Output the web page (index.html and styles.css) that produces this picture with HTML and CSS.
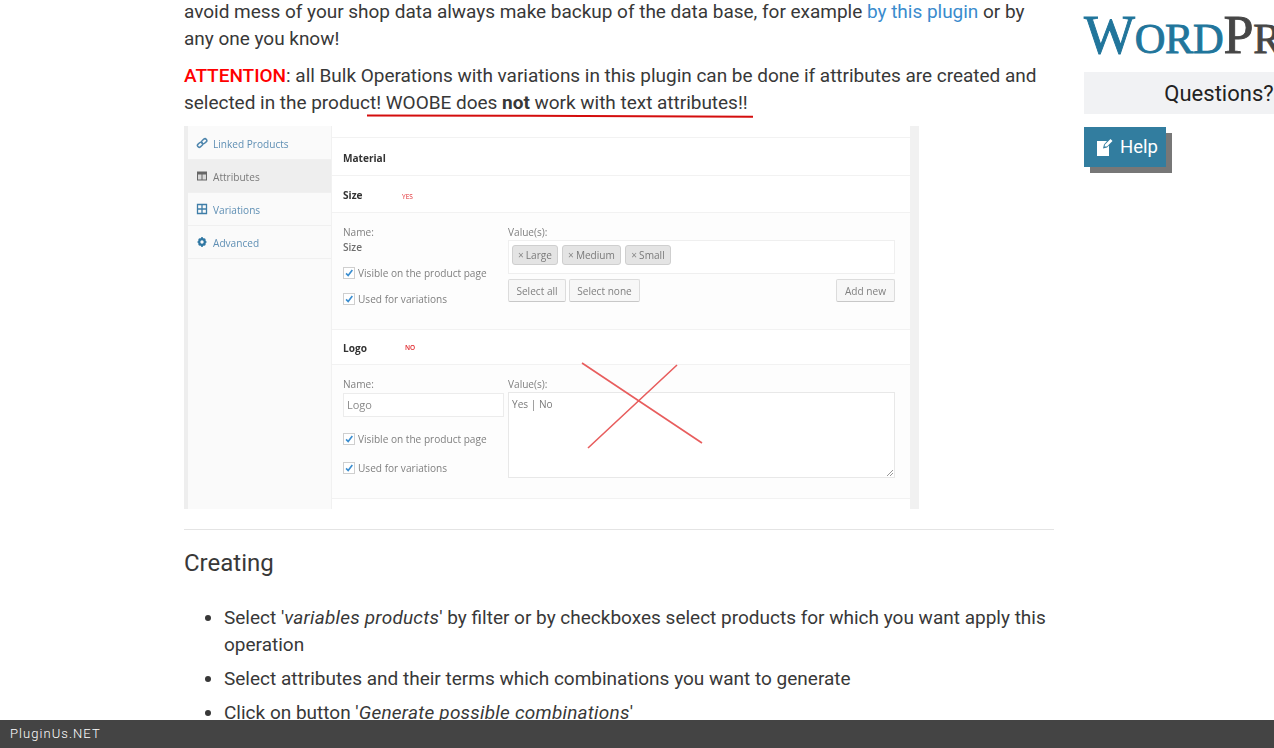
FILE: index.html
```html
<!DOCTYPE html>
<html lang="en">
<head>
<meta charset="utf-8">
<title>WOOBE Bulk Operations</title>
<link rel="stylesheet" href="styles.css">
</head>
<body>
<div class="page">
  <main class="article">
    <p>avoid mess of your shop data always make backup of the data base, for example <a href="#">by this plugin</a> or by any one you know!</p>
    <p><span class="attention">ATTENTION</span>: all Bulk Operations with variations in this plugin can be done if attributes are created and selected in the product! WOOBE does <strong>not</strong> work with text attributes!!<svg class="underline" width="388" height="5" viewBox="0 0 388 5"><path d="M0 1.600 L160 1.800 L386 2.800" fill="none" stroke="#d40d0d" stroke-width="2"/></svg></p>
    <div class="shot">
      <div class="strip-left"></div>
      <div class="tabs">
        <div class="tab tab-first"><svg class="tab-icon" viewBox="0 0 12 12"><g fill="none" stroke="#4f86ad" stroke-width="1.500"><rect x="1.200" y="6" width="5.600" height="3.600" rx="1.800" transform="rotate(-40 4 7.800)"/><rect x="5.400" y="2.400" width="5.600" height="3.600" rx="1.800" transform="rotate(-40 8.200 4.200)"/></g></svg><span>Linked Products</span></div>
        <div class="tab tab-active"><svg class="tab-icon" viewBox="0 0 12 12"><path d="M1 1.500h10v9H1z" fill="#666"/><path d="M2 4.500h3.500v5H2zM6.500 4.500H10v5H6.500z" fill="#d8d8d8"/></svg><span>Attributes</span></div>
        <div class="tab"><svg class="tab-icon" viewBox="0 0 12 12"><path d="M1.500 1.500h9v9h-9zM6 1.500v9M1.500 6h9" fill="none" stroke="#3f7ea8" stroke-width="1.300"/></svg><span>Variations</span></div>
        <div class="tab"><svg class="tab-icon" viewBox="0 0 12 12"><circle cx="6" cy="6" r="2.800" fill="none" stroke="#2f77a3" stroke-width="2.200"/><path d="M6 1v2M6 9v2M1.500 6h2M8.500 6h2M2.800 2.800l1.400 1.400M7.800 7.800l1.400 1.400M2.800 9.200l1.400-1.400M7.800 4.200l1.400-1.400" stroke="#2f77a3" stroke-width="1.600"/></svg><span>Advanced</span></div>
      </div>
      <div class="main">
        <div class="main-top"></div>
        <div class="row row-material"><b>Material</b></div>
        <div class="row row-attr"><b>Size</b><span class="flag flag-yes">YES</span></div>
        <div class="panel panel-size">
          <div class="col-left">
            <div class="lbl">Name:</div>
            <div class="lbl lbl-strong">Size</div>
            <div class="check check-first"><span class="box"><svg viewBox="0 0 12 12"><path d="M2.500 6.500 L5 9 L10 2.500" fill="none" stroke="#3b8ed0" stroke-width="2"/></svg></span>Visible on the product page</div>
            <div class="check check-next"><span class="box"><svg viewBox="0 0 12 12"><path d="M2.500 6.500 L5 9 L10 2.500" fill="none" stroke="#3b8ed0" stroke-width="2"/></svg></span>Used for variations</div>
          </div>
          <div class="col-right">
            <div class="lbl">Value(s):</div>
            <div class="values">
              <span class="tag tag-large"><i>×</i>Large</span>
              <span class="tag tag-medium"><i>×</i>Medium</span>
              <span class="tag tag-small"><i>×</i>Small</span>
            </div>
            <div class="btns">
              <span class="btn btn-all">Select all</span>
              <span class="btn btn-none">Select none</span>
              <span class="btn btn-add">Add new</span>
            </div>
          </div>
        </div>
        <div class="row row-attr row-logo"><b>Logo</b><span class="flag flag-no">NO</span></div>
        <div class="panel panel-logo">
          <div class="col-left">
            <div class="lbl">Name:</div>
            <div class="input">Logo</div>
            <div class="check check-logo"><span class="box"><svg viewBox="0 0 12 12"><path d="M2.500 6.500 L5 9 L10 2.500" fill="none" stroke="#3b8ed0" stroke-width="2"/></svg></span>Visible on the product page</div>
            <div class="check check-logo"><span class="box"><svg viewBox="0 0 12 12"><path d="M2.500 6.500 L5 9 L10 2.500" fill="none" stroke="#3b8ed0" stroke-width="2"/></svg></span>Used for variations</div>
          </div>
          <div class="col-right">
            <div class="lbl">Value(s):</div>
            <div class="textarea">Yes | No<svg class="grip" width="8" height="8" viewBox="0 0 8 8"><path d="M1 7L7 1M4 7L7 4" stroke="#999" stroke-width="1"/></svg></div>
          </div>
        </div>
      </div>
      <div class="strip-right"></div>
      <svg class="cross" width="735" height="383" viewBox="0 0 735 383"><path d="M398 237 L518 317 M493 239 L404 322" fill="none" stroke="#e85d5d" stroke-width="1.600"/></svg>
    </div>
    <hr class="rule">
    <h3 class="heading">Creating</h3>
    <ul class="steps">
      <li>Select '<em>variables products</em>' by filter or by checkboxes select products for which you want apply this operation</li>
      <li>Select attributes and their terms which combinations you want to generate</li>
      <li>Click on button '<em>Generate possible combinations</em>'</li>
    </ul>
  </main>
  <aside class="side">
    <div class="logo-top"><svg width="60" height="4" viewBox="0 0 60 4"><path d="M6 0 Q22 4 38 0 Z" fill="#464646"/></svg></div>
    <div class="logo"><span class="logo-word">W<small>ORD</small></span><span class="logo-press">P<small>RESS</small></span></div>
    <div class="questions">Questions?</div>
    <a class="help" href="#"><svg width="17" height="18" viewBox="0 0 17 18"><path d="M1 3h10L8 6.500 7 10.500 11 9.500 13 7.500V18H1z" fill="#fff"/><path d="M8.500 8.500 L9 6.500 L14.500 1 L16.500 3 L11 8.500 Z" fill="#fff"/></svg><span>Help</span></a>
  </aside>
</div>
<footer class="bar">PluginUs.NET</footer>
</body>
</html>
```
FILE: styles.css
```css
html, body {
  margin: 0;
  padding: 0;
  height: 100%;
  overflow: hidden;
  background: #fff;
}
body {
  font-family: Roboto, "Liberation Sans", sans-serif;
  color: #383838;
}
.page {
  display: flex;
  align-items: flex-start;
  gap: 30px;
  margin-top: -2px;
  padding-left: 184px;
  width: 1400px;
}
.article {
  width: 870px;
  flex: none;
  font-size: 19px;
  line-height: 27px;
}
.article p {
  margin: 0 0 10px;
  position: relative;
  letter-spacing: -0.02px;
}
.article a { color: #3a8bcd; text-decoration: none; }
.attention { color: #f00; font-weight: 500; }
.article strong { font-weight: 700; }
.article em { letter-spacing: 0.22px; }
.underline {
  position: absolute;
  left: 183px;
  top: 52px;
}
.shot {
  position: relative;
  display: flex;
  width: 735px;
  height: 383px;
  margin-top: 9px;
  background: #fff;
  font-family: "Open Sans", sans-serif;
  font-size: 10.100px;
  line-height: 14px;
  color: #666;
  overflow: hidden;
  filter: blur(0.45px);
}
.strip-left { width: 4px; background: #eee; flex: none; }
.strip-right { width: 9px; background: #f1f1f1; flex: none; }
.tabs { width: 144px; flex: none; background: #fafafa; border-right: 1px solid #f1f1f1; box-sizing: border-box; }
.tab {
  display: flex;
  align-items: center;
  gap: 5px;
  height: 33px;
  box-sizing: border-box;
  padding: 2px 0 0 8px;
  border-bottom: 1px solid #f0f0f0;
  color: #5f8fb4;
}
.tab-first { height: 34px; padding-top: 3px; }
.tab-active { background: #eeeeee; color: #7a7a7a; }
.tab-icon { width: 12px; height: 12px; flex: none; margin-top: -3px; }
.main { flex: 1; min-width: 0; }
.main-top { height: 12px; border-bottom: 1px solid #f2f2f2; box-sizing: border-box; }
.row {
  display: flex;
  align-items: center;
  height: 38px;
  box-sizing: border-box;
  padding: 0 0 0 11px;
  border-bottom: 1px solid #f2f2f2;
  color: #333;
}
.row-material { padding-top: 2px; }
.row-attr { height: 37px; padding-top: 2px; }
.row b { font-weight: 700; }
.row-logo { height: 36px; border-top: 1px solid #f2f2f2; padding-top: 2px; }
.flag { font-size: 6.500px; color: #e0282d; position: absolute; left: 218px; }
.flag-yes { margin-top: 3px; }
.flag-no { font-weight: 600; left: 221px; margin-top: 0; }
.panel {
  display: flex;
  box-sizing: border-box;
  padding: 12px 15px 0 11px;
  background: #fdfdfd;
}
.panel-size { height: 116px; }
.panel-logo { height: 134px; border-bottom: 1px solid #f2f2f2; }
.col-left { width: 165px; flex: none; }
.col-right { width: 387px; flex: none; }
.lbl { color: #808080; }
.lbl-strong { font-weight: 600; color: #6e6e6e; margin-top: 1px; }
.check { display: flex; align-items: center; gap: 3px; color: #808080; height: 14px; }
.check-first { margin-top: 12px; }
.check-next { margin-top: 12px; }
.check-logo { margin-top: 15px; }
.box {
  width: 12px;
  height: 12px;
  flex: none;
  background: #fff;
  border: 1px solid #cfcfcf;
  box-sizing: border-box;
  display: flex;
}
.box svg { width: 100%; height: 100%; }
.values {
  display: flex;
  gap: 4px;
  height: 34px;
  margin-top: 1px;
  padding: 4px 0 0 3px;
  box-sizing: border-box;
  background: #fff;
  border: 1px solid #efefef;
}
.tag {
  display: flex;
  align-items: center;
  justify-content: center;
  box-sizing: border-box;
  height: 20px;
  background: #e4e4e4;
  border: 1px solid #cfcfcf;
  border-radius: 3px;
  color: #7a7a7a;
}
.tag i { font-style: normal; margin-right: 2px; color: #888; }
.tag-large { width: 46px; }
.tag-medium { width: 59px; }
.tag-small { width: 46px; }
.btns { display: flex; gap: 3px; margin-top: 5px; }
.btn {
  display: flex;
  align-items: center;
  justify-content: center;
  box-sizing: border-box;
  height: 23px;
  background: #f7f7f7;
  border: 1px solid #dcdcdc;
  border-bottom-color: #c8c8c8;
  border-radius: 2px;
  color: #808080;
}
.btn-all { width: 58px; }
.btn-none { width: 71px; }
.btn-add { width: 59px; margin-left: auto; }
.input {
  box-sizing: border-box;
  width: 161px;
  height: 24px;
  margin-top: 2px;
  padding: 4px 3px;
  background: #fff;
  border: 1px solid #ececec;
  color: #8a8a8a;
  font-size: 11px;
}
.textarea {
  position: relative;
  box-sizing: border-box;
  height: 86px;
  margin-top: 1px;
  padding: 4px 3px;
  background: #fff;
  border: 1px solid #e8e8e8;
  color: #7a7a7a;
}
.grip { position: absolute; right: 0; bottom: 0; }
.cross { position: absolute; left: 0; top: 0; }
.rule {
  border: 0;
  border-top: 1px solid #e4e4e4;
  margin: 20px 0 0;
}
.heading {
  margin: 19px 0 0;
  font-size: 24px;
  line-height: 29px;
  font-weight: 400;
}
.steps {
  margin: 26px 0 0;
  padding: 0 0 0 40px;
}
.steps li { margin-bottom: 7px; }
.side { width: 270px; flex: none; }
.logo-top { height: 2px; padding-left: 120px; overflow: hidden; }
.logo {
  margin-top: 7px;
  height: 65px;
  font-family: "Liberation Serif", serif;
  font-size: 54px;
  line-height: 57px;
  white-space: nowrap;
  letter-spacing: -0.3px;
  font-weight: 400;
}
.logo small { font-size: 42.500px; }
.logo-word { color: #21759b; -webkit-text-stroke: 0.9px #21759b; }
.logo-press { color: #464646; -webkit-text-stroke: 0.9px #464646; }
.questions {
  height: 42px;
  background: #f1f2f4;
  font-size: 22px;
  line-height: 44px;
  text-align: center;
  color: #222;
}
.help {
  display: inline-flex;
  align-items: center;
  gap: 7px;
  box-sizing: border-box;
  width: 82px;
  height: 40px;
  margin-top: 13px;
  padding-left: 12px;
  background: #327d9f;
  box-shadow: 6px 6px 0 #777;
  color: #fff;
  font-size: 18.500px;
  text-decoration: none;
}
.bar {
  position: fixed;
  left: 0;
  right: 0;
  bottom: 0;
  height: 28px;
  padding-left: 10px;
  background: #444;
  color: #fff;
  font-size: 13px;
  line-height: 28px;
  letter-spacing: 1.05px;
  font-weight: 300;
}
```
